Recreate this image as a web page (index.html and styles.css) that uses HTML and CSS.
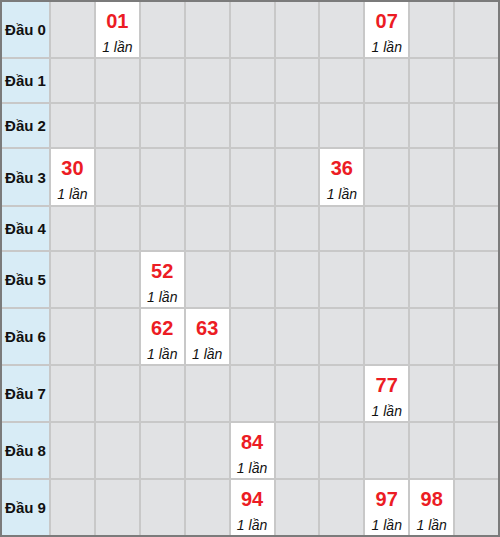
FILE: index.html
```html
<!DOCTYPE html>
<html lang="vi">
<head>
    <meta charset="UTF-8">
    <meta name="viewport" content="width=device-width, initial-scale=1.0">
    <title>Thống kê đầu đuôi</title>
    <link rel="stylesheet" href="styles.css">
</head>
<body>
    <div class="board">
        <!-- Đầu 0 -->
        <div class="head">Đầu 0</div>
        <div class="cell"></div>
        <div class="cell hit"><b>01</b><i>1 lần</i></div>
        <div class="cell"></div><div class="cell"></div><div class="cell"></div><div class="cell"></div><div class="cell"></div>
        <div class="cell hit"><b>07</b><i>1 lần</i></div>
        <div class="cell"></div><div class="cell"></div>

        <!-- Đầu 1 -->
        <div class="head">Đầu 1</div>
        <div class="cell"></div><div class="cell"></div><div class="cell"></div><div class="cell"></div><div class="cell"></div>
        <div class="cell"></div><div class="cell"></div><div class="cell"></div><div class="cell"></div><div class="cell"></div>

        <!-- Đầu 2 -->
        <div class="head">Đầu 2</div>
        <div class="cell"></div><div class="cell"></div><div class="cell"></div><div class="cell"></div><div class="cell"></div>
        <div class="cell"></div><div class="cell"></div><div class="cell"></div><div class="cell"></div><div class="cell"></div>

        <!-- Đầu 3 -->
        <div class="head">Đầu 3</div>
        <div class="cell hit"><b>30</b><i>1 lần</i></div>
        <div class="cell"></div><div class="cell"></div><div class="cell"></div><div class="cell"></div><div class="cell"></div>
        <div class="cell hit"><b>36</b><i>1 lần</i></div>
        <div class="cell"></div><div class="cell"></div><div class="cell"></div>

        <!-- Đầu 4 -->
        <div class="head">Đầu 4</div>
        <div class="cell"></div><div class="cell"></div><div class="cell"></div><div class="cell"></div><div class="cell"></div>
        <div class="cell"></div><div class="cell"></div><div class="cell"></div><div class="cell"></div><div class="cell"></div>

        <!-- Đầu 5 -->
        <div class="head">Đầu 5</div>
        <div class="cell"></div><div class="cell"></div>
        <div class="cell hit"><b>52</b><i>1 lần</i></div>
        <div class="cell"></div><div class="cell"></div><div class="cell"></div><div class="cell"></div><div class="cell"></div>
        <div class="cell"></div><div class="cell"></div>

        <!-- Đầu 6 -->
        <div class="head">Đầu 6</div>
        <div class="cell"></div><div class="cell"></div>
        <div class="cell hit"><b>62</b><i>1 lần</i></div>
        <div class="cell hit"><b>63</b><i>1 lần</i></div>
        <div class="cell"></div><div class="cell"></div><div class="cell"></div><div class="cell"></div>
        <div class="cell"></div><div class="cell"></div>

        <!-- Đầu 7 -->
        <div class="head">Đầu 7</div>
        <div class="cell"></div><div class="cell"></div><div class="cell"></div><div class="cell"></div><div class="cell"></div>
        <div class="cell"></div><div class="cell"></div>
        <div class="cell hit"><b>77</b><i>1 lần</i></div>
        <div class="cell"></div><div class="cell"></div>

        <!-- Đầu 8 -->
        <div class="head">Đầu 8</div>
        <div class="cell"></div><div class="cell"></div><div class="cell"></div><div class="cell"></div>
        <div class="cell hit"><b>84</b><i>1 lần</i></div>
        <div class="cell"></div><div class="cell"></div><div class="cell"></div><div class="cell"></div><div class="cell"></div>

        <!-- Đầu 9 -->
        <div class="head">Đầu 9</div>
        <div class="cell"></div><div class="cell"></div><div class="cell"></div><div class="cell"></div>
        <div class="cell hit"><b>94</b><i>1 lần</i></div>
        <div class="cell"></div><div class="cell"></div>
        <div class="cell hit"><b>97</b><i>1 lần</i></div>
        <div class="cell hit"><b>98</b><i>1 lần</i></div>
        <div class="cell"></div>
    </div>
</body>
</html>
```

FILE: styles.css
```css
/* Page */
body {
  margin: 0;
  font-family: "Liberation Sans", Arial, sans-serif;
}

/* Board grid */
.board {
  width: 500px;
  height: 537px;
  box-sizing: border-box;
  border: 2px solid #7b7b7b;
  background-color: #c8c8c8;
  display: grid;
  grid-template-columns: 47px repeat(10, 1fr);
  grid-template-rows: 55px 43px 43px 56px 43px 55px 55px 55px 55px 55px;
  gap: 2px;
}

/* Row labels */
.head {
  background-color: #d8ecf6;
  color: #111;
  font-size: 15px;
  font-weight: bold;
  display: flex;
  align-items: center;
  justify-content: center;
  white-space: nowrap;
}

/* Empty cells */
.cell {
  background-color: #e1e2e4;
}

/* Cells with a result */
.cell.hit {
  background-color: #fff;
  display: flex;
  flex-direction: column;
  align-items: center;
  padding-top: 8px;
  box-sizing: border-box;
}

.cell.hit b {
  color: #ec1c24;
  font-size: 20px;
  line-height: 22px;
}

.cell.hit i {
  color: #111;
  font-size: 14px;
  line-height: 16px;
  margin-top: 7px;
  white-space: nowrap;
}
```
